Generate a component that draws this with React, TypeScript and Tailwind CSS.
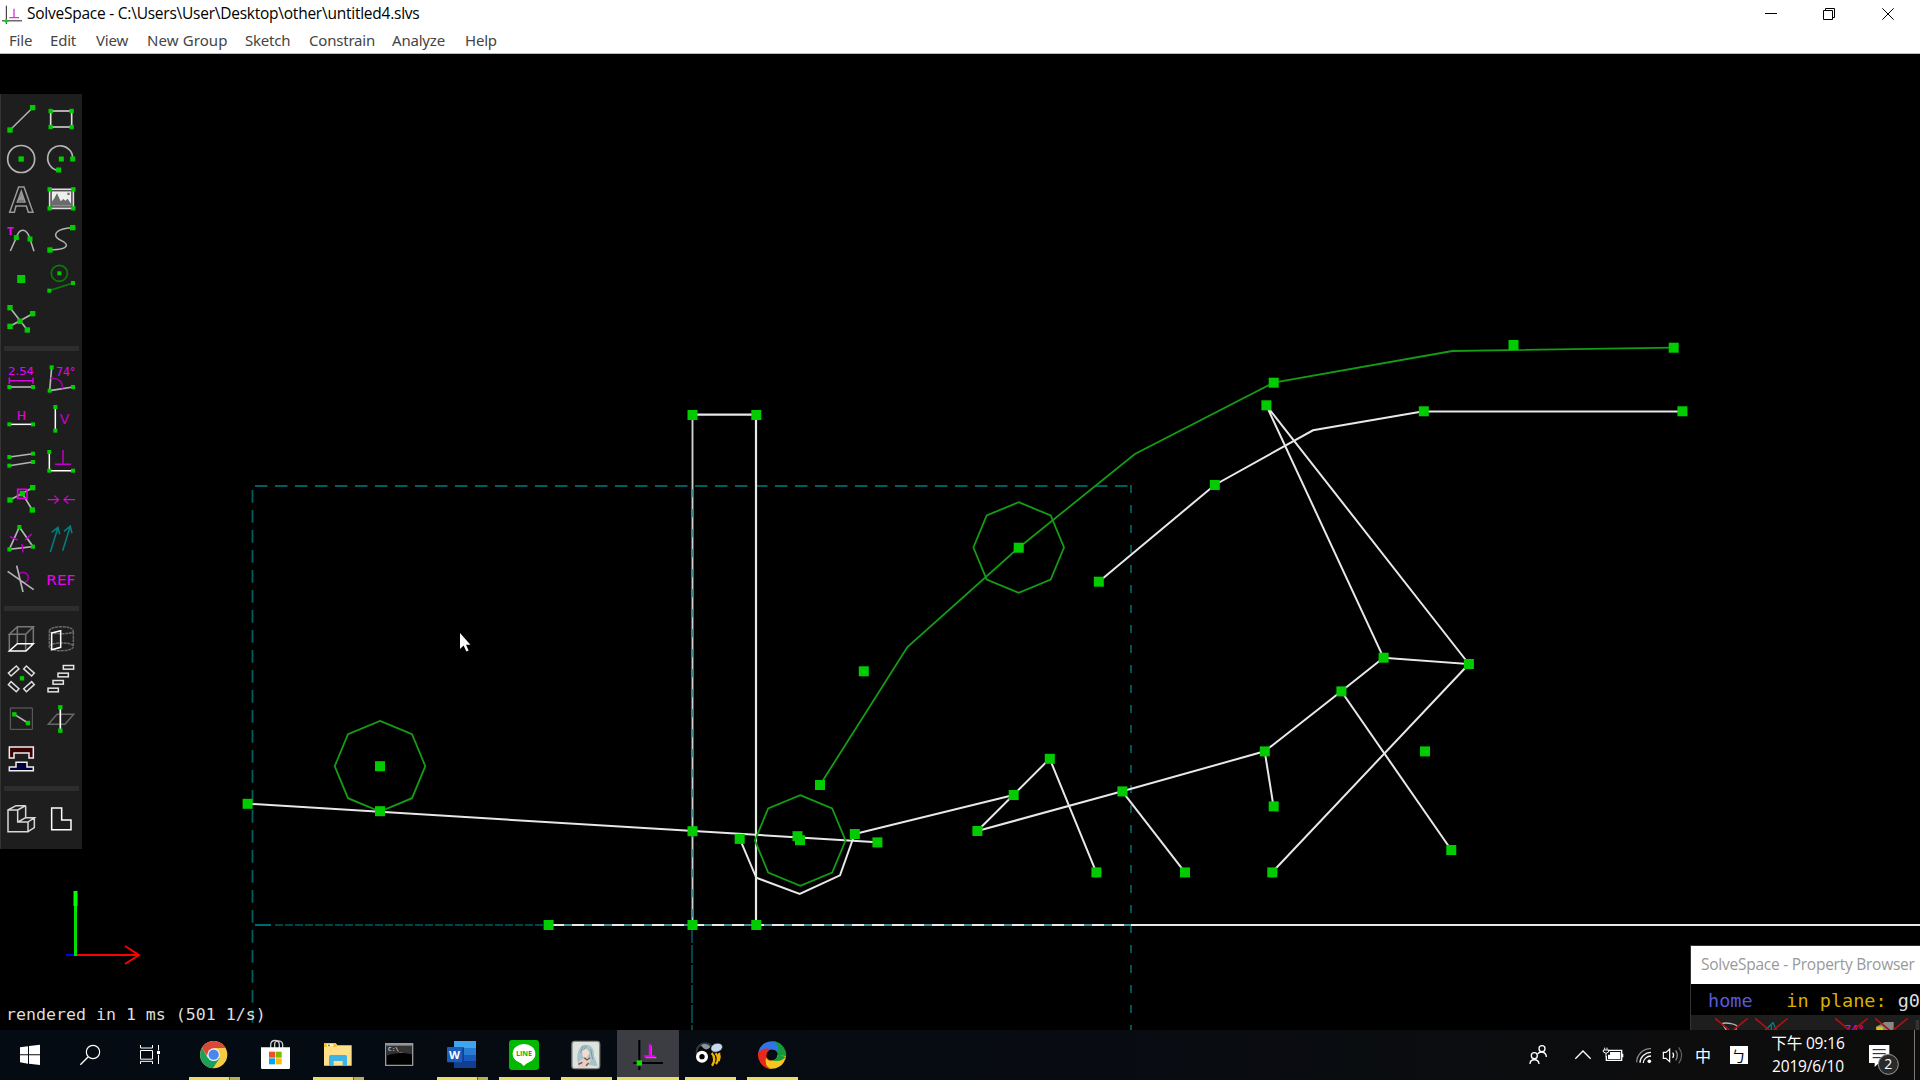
import React from "react";

type Pt = [number, number];

const GREEN = "#00cc00";
const MAG = "#e000e0";

/* ---------- sketch canvas ---------- */

const points: Pt[] = [
  [692.5, 415], [756.3, 415], [692.5, 831.2], [739.7, 838.9], [797.5, 836.2], [800, 840.2], [820, 785],
  [854.8, 834], [877.4, 842.4], [1013.7, 795], [1049.8, 758.8], [977.4, 831], [1122.4, 791.4],
  [1096.4, 872.4], [692.5, 925], [756.3, 925], [548.6, 925], [247.6, 803.8], [380, 766.2], [380, 811.2],
  [1273.7, 382.7], [1673.7, 347.7], [1513.5, 345], [1266.4, 405.3], [1214.8, 485], [1423.8, 411.3],
  [1682.4, 411.3], [1018.7, 547.7], [863.8, 671.3], [1098.8, 581.7], [1383.6, 657.7], [1468.9, 664],
  [1341.4, 691.4], [1264.8, 751.4], [1425, 751.4], [1273.7, 806.4], [1451.3, 850], [1272.3, 872.4],
  [1185, 872.4],
];

const whiteLines = [
  "247.6,803.7 877.3,842.3",
  "739.7,838.7 756.3,877.8 799.7,894 840,875.3 854.7,834",
  "854.7,834 1013.7,795",
  "977.3,831 1049.7,758.7 1096.3,872.3",
  "977.3,831 1122.3,791.3 1264.7,751.3 1341.3,691.3 1383.5,657.7 1468.9,664 1272.2,872.3",
  "1122.3,791.3 1185,872.3",
  "1264.7,751.3 1273.5,806.3",
  "1341.3,691.3 1451.3,850",
  "1383.5,657.7 1266.3,405.3 1468.9,664",
  "1098.8,581.7 1214.7,485 1313,430.3 1423.7,411.3",
];

const octagon = (cx: number, cy: number) => {
  const r = 45.3;
  const d = 32;
  return `${cx},${cy - r} ${cx + d},${cy - d} ${cx + r},${cy} ${cx + d},${cy + d} ${cx},${cy + r} ${cx - d},${cy + d} ${cx - r},${cy} ${cx - d},${cy - d}`;
};

function Sketch() {
  return (
    <svg className="absolute inset-0 h-full w-full" viewBox="0 54 1920 976" fill="none">
      <g stroke="#005e60" strokeWidth="1.8">
        <path d="M255 486H1131" strokeDasharray="12.5 7.5" />
        <path d="M252.5 490V1030" strokeDasharray="12.7 7.3" />
        <path d="M1131 485V1030" strokeDasharray="8 12" />
        <path d="M255 925H271" stroke="#006b6e" strokeWidth="2" />
        <path d="M275 925H548" strokeDasharray="8 2" strokeWidth="1.5" />
        <path d="M692 925V1030" strokeDasharray="18 2" strokeWidth="1.5" />
      </g>
      <g stroke="#e8e8e8" strokeWidth="2">
        {whiteLines.map((p) => (
          <polyline key={p} points={p} />
        ))}
        <path d="M692.5 415V925" stroke="#cfcfcf" strokeWidth="1.9" />
        <path d="M692.3 414.7H756M756 415V925M548.5 925H1920M1423.7 411.5H1682.3" strokeWidth="2.2" />
      </g>
      <g stroke="#3c8f92" strokeWidth="2">
        <path d="M692.3 489V925" strokeDasharray="8.3 11.7" />
        <path d="M564 925H1131" strokeDasharray="8 12" strokeWidth="2.2" />
      </g>
      <g stroke="#149c14" strokeWidth="1.8">
        <polygon points={octagon(380, 766.2)} />
        <polygon points={octagon(800.2, 840.5)} />
        <polygon points={octagon(1018.7, 547.5)} />
        <polyline points="820,785 907.4,647 1018.7,547.7 1134.9,454 1273.7,382.7 1452.3,351 1673.7,347.7" />
      </g>
      {points.map(([x, y], i) => (
        <rect key={i} x={x - 5} y={y - 5} width="10" height="10" fill={GREEN} />
      ))}
      <g strokeWidth="2">
        <path d="M66 955H75" stroke="#0000ff" />
        <path d="M76 955H139M125 946L139 955L125 964" stroke="#ff0000" />
        <path d="M75.5 956V892" stroke="#00e000" strokeWidth="3" />
        <path d="M75.5 906V891" stroke="#00ff00" strokeWidth="4" />
      </g>
      <path d="M460 633V649L463.6 645.6L466.4 651.4L468.6 650.4L466 644.8H470.4Z" fill="#fff" />
    </svg>
  );
}

/* ---------- toolbar ---------- */

/* Green handles drawn at the ends of the icon strokes. */
function Dots({ at, s = 13 }: { at: Pt[]; s?: number }) {
  return (
    <g fill={GREEN} stroke="none">
      {at.map(([x, y], i) => (
        <rect key={i} x={x - s / 2} y={y - s / 2} width={s} height={s} />
      ))}
    </g>
  );
}

function Tools({ top, icons }: { top: number; icons: React.ReactNode[] }) {
  return (
    <div className="grid grid-cols-[40px_40px] pl-px">
      {icons.map((icon, i) => (
        <svg
          key={i}
          className="h-10 w-10"
          viewBox={`${3 + (i % 2) * 120} ${top + Math.floor(i / 2) * 120} 120 120`}
          fill="none"
          stroke="#b4b4b4"
          strokeWidth="4.5"
        >
          {icon}
        </svg>
      ))}
    </div>
  );
}

const label = { fill: "#f000f0", stroke: "none", fontFamily: "'DejaVu Sans', sans-serif" };

const drawTools = [
  <><path d="M30 120L98 53" /><Dots at={[[30, 120], [98, 53]]} s={16} /></>,
  <><path d="M152 63H215V111H152Z" stroke="#ddd" strokeWidth="5" /><Dots at={[[152, 63], [215, 63], [152, 111], [215, 111]]} /></>,
  <><circle cx="63.500" cy="207" r="40.500" strokeWidth="5" /><Dots at={[[63.5, 207]]} s={16} /></>,
  <><path d="M218 207A37.500 37.500 0 1 0 176 242" strokeWidth="5" /><Dots at={[[184, 207], [218, 207], [176, 240]]} s={15} /></>,
  <path d="M56 291H72L99 367H85L79 348H48L43 367H29ZM52 336H75L64 304ZM59 330L64 318L68 330Z" stroke="#999" />,
  <>
    <path d="M149 298H220V355H149Z" stroke="#ddd" strokeWidth="5" fill="#222" />
    <path d="M155 304H214V349H155Z" fill="#eee" stroke="none" />
    <path d="M155 347V335L162 326L171 310L182 334L190 327L196 332L203 326L214 343V347ZM202 308H209V315H202Z" fill="#6b6b6b" stroke="none" />
    <Dots at={[[149, 298], [220, 298], [149, 355], [220, 355]]} />
  </>,
  <>
    <path d="M31 483L49 443C58 413 80 413 90 447L102 484" />
    <text {...label} x="22" y="435" fontSize="29" fontWeight="bold" textLength="19" lengthAdjust="spacingAndGlyphs">T</text>
    <Dots at={[[49, 443], [90, 447]]} s={15} />
  </>,
  <><path d="M218 413C185 414 166 424 167 436C169 452 199 452 199 466C198 477 174 479 150 480" /><Dots at={[[218, 413], [150, 480]]} s={16} /></>,
  <Dots at={[[63.5, 567]]} s={24} />,
  <>
    <circle cx="178" cy="550" r="24" stroke="#087d08" strokeWidth="5" />
    <path d="M148 602L219 579" stroke="#087d08" strokeWidth="5" />
    <Dots at={[[178, 550], [148, 602], [219, 579]]} s={12} />
  </>,
  <><path d="M30 653L82 720M30 709L98 671" strokeWidth="5" /><Dots at={[[30, 653], [82, 720], [30, 709], [98, 671], [60, 694]]} s={16} /></>,
];

const constrainTools = [
  <>
    <text {...label} x="24" y="106" fontSize="34" textLength="78" lengthAdjust="spacingAndGlyphs">2.54</text>
    <path d="M28 113V131M99 113V131M28 122H99" stroke={MAG} />
    <path d="M28 141H99" strokeWidth="5" />
    <Dots at={[[28, 141], [99, 141]]} s={12} />
  </>,
  <>
    <path d="M155 82L149 152L219 141" strokeWidth="5" />
    <path d="M152 115C175 112 189 126 187 146" stroke="#a000a8" />
    <text {...label} x="168" y="109" fontSize="36" textLength="58" lengthAdjust="spacingAndGlyphs">74°</text>
    <Dots at={[[155, 82], [149, 152], [219, 141]]} s={12} />
  </>,
  <>
    <text {...label} x="50" y="240" fontSize="35" textLength="28" lengthAdjust="spacingAndGlyphs">H</text>
    <path d="M28 253H99" stroke="#fff" />
    <Dots at={[[28, 253], [99, 253]]} s={12} />
  </>,
  <>
    <path d="M166 201V272" stroke="#fff" />
    <text {...label} x="179" y="252" fontSize="43" fill="#c400cc" textLength="29" lengthAdjust="spacingAndGlyphs">V</text>
    <Dots at={[[166, 201], [166, 272]]} s={12} />
  </>,
  <><path d="M28 351L99 341M28 377L99 366" /><Dots at={[[28, 351], [99, 341], [28, 377], [99, 366]]} s={12} /></>,
  <>
    <path d="M148 336V392H219" stroke="#fff" />
    <path d="M165 373H214M189 373V330" stroke="#c000c8" />
    <Dots at={[[148, 336], [148, 392], [219, 392]]} s={12} />
  </>,
  <>
    <path d="M30 480L98 443M67 461L97 510" strokeWidth="5" />
    <Dots at={[[30, 480], [98, 443], [67, 461], [97, 510]]} s={16} />
    <path d="M53 448H81V475H53Z" stroke={MAG} strokeWidth="5" />
  </>,
  <path d="M143 479H176M163 467L176 479L163 491M225 479H192M205 467L192 479L205 491" stroke={MAG} strokeWidth="3.500" />,
  <>
    <path d="M58 561L28 628L99 620Z" strokeWidth="5" />
    <path d="M30 590L53 600M75 600L95 582M66 612L69 637" stroke="#c000c8" />
    <Dots at={[[58, 561], [28, 628], [99, 620]]} s={12} />
  </>,
  <path d="M151 636L174 562M155 577L174 562L179 583M188 632L211 558M192 574L211 558L216 580" stroke="#008080" />,
  <>
    <path d="M58 700C72 692 87 702 85 716C83 727 72 729 63 724" stroke="#a000a8" strokeWidth="5" />
    <path d="M23 694L101 749M50 677L69 756" strokeWidth="5" />
  </>,
  <text {...label} x="139" y="734" fontSize="42" textLength="87" lengthAdjust="spacingAndGlyphs">REF</text>,
];

const slats: Pt[] = [[205, 202], [189, 225], [174, 247], [159, 270]];

const groupTools = [
  <>
    <path d="M28 103L52 80H100L77 103ZM28 103V153M52 80V130M77 103V152M100 80V130" stroke="#777" />
    <path d="M28 153L52 131H100L78 153Z" stroke="#fff" />
  </>,
  <>
    <path d="M148 93C148 76 220 76 220 93C220 104 148 104 148 93V140C148 156 220 156 220 140V93M148 137C160 126 210 126 220 137" stroke="#6a6a6a" strokeDasharray="9 2" />
    <path d="M155 99L182 92V142L155 149Z" stroke="#fff" />
  </>,
  <>
    {([[41, 213, -42], [87, 213, 42], [41, 260, 42], [87, 260, -42]] as [number, number, number][]).map(([x, y, a]) => (
      <rect key={`${x}-${y}`} x={x - 16} y={y - 6} width="32" height="12" transform={`rotate(${a} ${x} ${y})`} stroke="#ddd" />
    ))}
    <Dots at={[[66, 235]]} />
  </>,
  <>
    {slats.map(([x, y]) => (
      <rect key={x} x={x - 15} y={y - 5.5} width="31" height="11" stroke="#e4e4e4" />
    ))}
  </>,
  <><path d="M31 324H97V388H31Z" stroke="#666" strokeWidth="3" /><path d="M43 343L84 369" strokeWidth="5" /><Dots at={[[43, 343], [84, 369]]} /></>,
  <>
    <path d="M145 373L171 343H221L195 373Z" stroke="#666" />
    <path d="M181 322V392" stroke="#fff" strokeWidth="5" />
    <Dots at={[[181, 322], [181, 392]]} />
  </>,
  <>
    <path d="M28 441H100V474H87V459H42V474H28Z" fill="#3c0000" stroke="#eee" />
    <path d="M28 512V501H48V487H81V501H100V512Z" fill="#00003c" stroke="#eee" />
  </>,
];

const viewTools = [
  <path d="M24 630H53V666H84V695H24ZM24 630L48 617H77L53 630M77 617V653L54 666M77 653H103L84 666M103 653V683L84 695" stroke="#d8d8d8" />,
  <path d="M155 624H185V660H213V689H155Z" stroke="#fff" />,
];

function Rule() {
  return <div className="ml-1 h-[5px] w-[75px] shrink-0 bg-[#2d2d2d]" />;
}

function Toolbar() {
  return (
    <div className="absolute left-0 top-10 flex h-[755px] w-[82px] flex-col border-l border-[#333] bg-[#1e1e1e] pt-[5px]">
      <div className="-ml-px flex flex-col">
        <Tools top={27} icons={drawTools} />
        <div className="pt-[7px] pb-2"><Rule /></div>
        <Tools top={57} icons={constrainTools} />
        <div className="pt-[7px] pb-2"><Rule /></div>
        <Tools top={57} icons={groupTools} />
        <div className="pt-[7px] pb-2"><Rule /></div>
        <Tools top={597} icons={viewTools} />
      </div>
    </div>
  );
}

/* ---------- title and menus ---------- */

const menus: [string, string][] = [
  ["File", "w-[41px]"], ["Edit", "w-[46px]"], ["View", "w-[51px]"], ["New Group", "w-[98px] tracking-[0.1px]"],
  ["Sketch", "w-[64px]"], ["Constrain", "w-[83px]"], ["Analyze", "w-[73px]"], ["Help", "w-[60px]"],
];

function TitleBar() {
  return (
    <header className="h-[54px] border-b border-[#bbb] bg-white text-black">
      <div className="flex h-[28px] items-center">
        <svg className="ml-0.5 h-5 w-5" viewBox="6 8 60 60" fill="none">
          <path d="M19 13V68M6 58.500H66" stroke="#222" strokeWidth="3" />
          <path d="M42 22V49M28 49H57" stroke="#d838d8" strokeWidth="4" />
          <path d="M12 59L19 52L26 59L19 66Z" fill="#10d010" />
        </svg>
        <span className="ml-[5px] whitespace-nowrap font-['Open_Sans','Noto_Sans',sans-serif] text-[15.5px] tracking-[-0.24px]">
          SolveSpace - C:\Users\User\Desktop\other\untitled4.slvs
        </span>
        <svg className="ml-auto h-[29px] w-[200px] shrink-0" viewBox="0 0 600 87" fill="none" stroke="#000" strokeWidth="3">
          <path d="M135 40.500H171M310.500 31.500H337.500V58.500H310.500ZM316.500 30V25.500H343.500V52.500H338M487 25L521 59M521 25L487 59" />
        </svg>
      </div>
      <nav className="flex h-6 items-center pl-[9px] font-['Noto_Sans',sans-serif] text-[15px] tracking-[-0.2px] text-[#444]">
        {menus.map(([name, w]) => (
          <span key={name} className={`${w} whitespace-nowrap`}>{name}</span>
        ))}
      </nav>
    </header>
  );
}

/* ---------- property browser ---------- */

function PropertyBrowser() {
  return (
    <div className="absolute bottom-0 right-0 h-[85px] w-[230px] overflow-hidden border-l border-t border-[#333] bg-[#1e1e1e]">
      <div className="flex h-[38px] items-center bg-white pl-[10px] font-['Open_Sans',sans-serif] text-[15.5px] tracking-[-0.25px] whitespace-nowrap text-[#999]">
        SolveSpace - Property Browser
      </div>
      <div className="flex h-[31px] items-center whitespace-pre bg-black pl-[17px] pt-0.5 font-['DejaVu_Sans_Mono',monospace] text-[18.5px] text-[#d8b000]">
        <span className="w-[81px] text-[#5a5ad8]">home</span>
        <span>in plane: </span>
        <span className="text-[#ddd]">g0</span>
      </div>
      <svg className="h-[15px] w-[228px]" viewBox="574 255 684 45" fill="none" stroke="#b4b4b4" strokeWidth="4">
        <path d="M666 281C680 276 712 282 712 290L708 300M668 281L680 300" />
        <path d="M797 300L820 278L830 300M815 300V285" stroke="#008080" />
        <text {...label} x="1034" y="309" fontSize="32" textLength="58" lengthAdjust="spacingAndGlyphs">74°</text>
        <path d="M1130 290L1155 276H1182V300H1130Z" fill="#888" stroke="none" />
        <path d="M1130 290H1150V300H1130Z" fill="#cccc00" stroke="none" />
        <path d="M646 265L695 305L744 265M766 265L815 305L864 265M1006 265L1055 305L1104 265M1126 265L1175 305L1224 265" stroke="#b01010" strokeWidth="5" />
        <path d="M1248 270H1260V300H1248Z" fill="#333" stroke="none" />
      </svg>
    </div>
  );
}

/* ---------- taskbar ---------- */

const solveIcon = (
  <>
    <path d="M1018 45V135M1000 114H1089" stroke="#000" strokeWidth="6" />
    <path d="M1037 98H1069M1053 62V92" stroke="#999" strokeWidth="4" />
    <path d="M1033 94H1065M1050 58V94" stroke="#f000f0" strokeWidth="7" />
    <path d="M1010 106H1026V122H1010Z" fill="#10e000" />
  </>
);

interface TaskApp {
  view: string;
  icon: React.ReactNode;
  state?: "open" | "many" | "active";
}

const apps: TaskApp[] = [
  {
    view: "549 480 186 150", state: "many",
    icon: (
      <>
        <circle cx="641" cy="554" r="41" fill="#f8cb45" />
        <path d="M606 533A41 41 0 0 0 639 595L659 564L641 554L623 564Z" fill="#1a9f5c" />
        <path d="M606 533A41 41 0 0 1 677 534H641L620 556Z" fill="#d9483b" />
        <circle cx="641" cy="554" r="19" fill="#f4f4f4" />
        <circle cx="641" cy="554" r="15.500" fill="#4a86ee" />
      </>
    ),
  },
  {
    view: "735 480 186 150",
    icon: (
      <>
        <path d="M812 534V525C812 507 838 507 838 525V534M824 534V522C824 508 848 510 848 525V534" stroke="#ccc" strokeWidth="4" />
        <path d="M783 532H870V593Q870 597 866 597H787Q783 597 783 593Z" fill="#fff" />
        <path d="M807 545H825V563H807Z" fill="#f25022" /><path d="M827 545H845V563H827Z" fill="#7fba00" />
        <path d="M807 565H825V583H807Z" fill="#00a4ef" /><path d="M827 565H845V583H827Z" fill="#ffb900" />
      </>
    ),
  },
  {
    view: "21 15 186 150", state: "many",
    icon: (
      <>
        <path d="M72 54H107L112 61H155V122H72Z" fill="#ffe08a" /><path d="M72 54H107L111 66H72Z" fill="#f8c030" />
        <path d="M81 58H100V64H81Z" fill="#fff" /><path d="M84 59H90V63H84Z" fill="#2a8fd0" />
        <path d="M87 123V95Q87 90 92 90H136Q141 90 141 95V123H128V108H101V123Z" fill="#3cb4e7" />
      </>
    ),
  },
  {
    view: "207 15 186 150",
    icon: (
      <>
        <path d="M257 56H338V121H257Z" fill="#000" stroke="#999" strokeWidth="4" />
        <path d="M259 58H336V62H259Z" fill="#ccc" /><path d="M259 62H336V88Q290 78 259 92Z" fill="#333" />
        <text x="264" y="78" fontSize="16" fill="#eee" textLength="44" lengthAdjust="spacingAndGlyphs" fontFamily="'DejaVu Sans Mono', monospace">C:\_</text>
      </>
    ),
  },
  {
    view: "393 15 186 150", state: "many",
    icon: (
      <>
        <path d="M462 48H528V69H462Z" fill="#41a5ee" /><path d="M462 69H528V90H462Z" fill="#2b7cd3" />
        <path d="M462 90H528V110H462Z" fill="#185abd" /><path d="M462 110H528V129H462Z" fill="#103f91" />
        <path d="M462 67H492V118H462Z" fill="#123f88" />
        <rect x="441" y="66" width="46" height="46" rx="3" fill="#1b5ebe" />
        <text x="447" y="101" fontSize="34" fontWeight="bold" fill="#fff" textLength="33" lengthAdjust="spacingAndGlyphs" fontFamily="'Open Sans', sans-serif">W</text>
      </>
    ),
  },
  {
    view: "579 15 186 150", state: "open",
    icon: (
      <>
        <rect x="627" y="45" width="90" height="90" rx="9" fill="#00b900" />
        <ellipse cx="672" cy="86" rx="34" ry="29" fill="#fff" />
        <path d="M660 112H685L671 123Z" fill="#fff" />
        <text x="648" y="94" fontSize="22" fontWeight="bold" fill="#00b900" textLength="48" lengthAdjust="spacingAndGlyphs" fontFamily="'Open Sans', sans-serif">LINE</text>
      </>
    ),
  },
  {
    view: "765 15 186 150", state: "open",
    icon: (
      <>
        <rect x="816" y="49" width="83" height="82" rx="8" fill="#dfe3dd" stroke="#888" strokeWidth="4" />
        <path d="M842 125C825 112 830 68 851 60C873 57 884 72 882 92L893 122C880 126 862 115 850 122Z" fill="#a6c4c8" />
        <path d="M846 77C854 68 866 72 868 84C866 95 856 100 848 94Z" fill="#f0dcd0" />
        <path d="M838 108L862 94L873 104L862 128H832Z" fill="#e2cfc4" />
        <path d="M853 98L861 105L870 98M835 118L847 112M858 122L866 114" stroke="#7a4d48" strokeWidth="4" />
        <path d="M849 63L842 83M860 62L850 76M872 72L878 103" stroke="#779aa2" strokeWidth="3" />
      </>
    ),
  },
  { view: "951 15 186 150", state: "active", icon: solveIcon },
  {
    view: "1137 15 186 150", state: "open",
    icon: (
      <>
        <circle cx="1215" cy="80" r="28" fill="#303840" /><circle cx="1218" cy="86" r="27" fill="#030303" />
        <path d="M1203 61C1211 54 1225 56 1231 65C1223 77 1211 76 1203 61Z" fill="#8a949e" />
        <ellipse cx="1243" cy="102" rx="24" ry="27" fill="#080808" />
        <path d="M1235 84C1246 95 1244 112 1236 122M1247 85C1257 96 1254 109 1248 117M1257 84Q1261 95 1256 108" stroke="#f2b400" strokeWidth="7" />
        <ellipse cx="1250" cy="68" rx="18" ry="13" transform="rotate(-18 1250 68)" fill="#c4d8f0" stroke="#222" strokeWidth="2" />
        <circle cx="1206" cy="95" r="18" fill="#fff" /><circle cx="1206" cy="95" r="8" fill="#000" />
      </>
    ),
  },
  {
    view: "1323 15 186 150", state: "open",
    icon: (
      <g strokeWidth="25">
        <path d="M1387 86A29 29 0 0 1 1426 63" stroke="#3074e8" />
        <path d="M1420 61A29 29 0 0 1 1444 100" stroke="#15993a" />
        <path d="M1445 92A29 29 0 0 1 1406 117" stroke="#f8c51c" />
        <path d="M1412 119A29 29 0 0 1 1387 84" stroke="#e8291c" />
        <path d="M1420 49Q1440 60 1433 82Q1426 72 1416 72Z" fill="#3074e8" stroke="none" />
        <path d="M1457 96Q1443 112 1420 107Q1433 100 1434 88Z" fill="#15993a" stroke="none" />
        <path d="M1412 131Q1392 122 1398 98Q1405 108 1416 108Z" fill="#f8c51c" stroke="none" />
        <path d="M1375 84Q1388 66 1412 72Q1400 79 1398 92Z" fill="#e8291c" stroke="none" />
      </g>
    ),
  },
];

function Cell({ view, w, children }: { view: string; w: string; children: React.ReactNode }) {
  return <svg className={`h-[50px] shrink-0 ${w}`} viewBox={view} fill="none" stroke="none">{children}</svg>;
}

function Taskbar() {
  return (
    <footer className="flex h-[50px] overflow-hidden bg-linear-to-r from-[#050b12] via-[#070b12] to-[#0e0d0c] text-white">
      <Cell w="w-[60px]" view="0 480 180 150">
        <path d="M60 532L84 529V553H60ZM87 528L120 524V553H87ZM60 556H84V581L60 577ZM87 556H120V585L87 581Z" fill="#fff" />
      </Cell>
      <Cell w="w-[60px]" view="180 480 180 150">
        <path d="M264 561L241 584" stroke="#fff" strokeWidth="4" /><circle cx="279" cy="546" r="20" stroke="#fff" strokeWidth="3.500" />
      </Cell>
      <Cell w="w-[63px]" view="360 480 189 150">
        <path d="M421.500 525V534H457.500V525M421.500 541.500H457.500V567.500H421.500ZM421.500 582V574H457.500V582M475.500 525V541M475.500 554V582" stroke="#fff" strokeWidth="3" />
        <path d="M471 543H480V552H471Z" fill="#fff" />
      </Cell>
      {apps.map((a) => (
        <div key={a.view} className={`relative w-[62px] shrink-0 ${a.state === "active" ? "bg-[#3b3d42]" : ""}`}>
          <Cell w="w-[62px]" view={a.view}>{a.icon}</Cell>
          {a.state && (
            <div className={`absolute bottom-0 flex h-[3px] justify-end bg-[#ecdc62] ${a.state === "active" ? "inset-x-0" : "left-1.5 w-[51px]"}`}>
              {a.state === "many" && <div className="w-[11px] border-l border-[#6b6330] bg-[#b9ad55]" />}
            </div>
          )}
        </div>
      ))}
      <div className="ml-auto flex">
        <Cell w="w-[48px]" view="60 300 144 150">
          <g stroke="#fff" strokeWidth="4">
            <circle cx="126" cy="356" r="9" /><circle cx="103" cy="377" r="9" />
            <path d="M90 402C90 385 116 385 117 402M113 372C120 361 139 366 139 381" />
          </g>
        </Cell>
        <Cell w="w-[30px]" view="204 300 90 150"><path d="M226 386L249 363L272 386" stroke="#fff" strokeWidth="4" /></Cell>
        <Cell w="w-[30px]" view="294 300 90 150">
          <path d="M325 361H365V391H319V378" stroke="#fff" strokeWidth="4" /><path d="M330 366H361V387H324V374H330ZM365 371H370V382H365Z" fill="#fff" />
          <path d="M314 353V359M321 353V359M310 360H326V366Q318 374 310 366ZM318 370V380" stroke="#fff" strokeWidth="3" />
        </Cell>
        <Cell w="w-[30px]" view="384 300 90 150">
          <g strokeWidth="4">
            <path d="M410 397C410 374 430 355 453 356" stroke="#888" /><path d="M420 398C420 382 435 367 453 367" stroke="#eee" />
            <path d="M430 399C430 388 440 378 453 378" stroke="#fff" />
          </g>
          <circle cx="448" cy="394" r="5.500" fill="#fff" />
        </Cell>
        <Cell w="w-[30px]" view="474 300 90 150">
          <g strokeWidth="3.500">
            <path d="M490 367H498L509 357V395L498 385H490Z" stroke="#fff" /><path d="M518 368Q524 376 518 384" stroke="#fff" />
            <path d="M527 361Q537 376 527 391" stroke="#999" /><path d="M536 352Q554 376 536 400" stroke="#666" />
          </g>
        </Cell>
        <div className="grid w-[30px] place-items-center font-['Noto_Sans_CJK_TC',sans-serif] text-[16px]">中</div>
        <div className="grid w-[41px] place-items-center">
          <span className="grid h-[18px] w-[18px] place-items-center bg-white font-['Noto_Sans_CJK_TC',sans-serif] text-[15px] leading-none text-black">ㄅ</span>
        </div>
        <div className="flex w-[98px] flex-col items-center pt-0.5 font-['Open_Sans','Noto_Sans_CJK_TC',sans-serif] text-[15.5px] leading-[23px] tracking-[-0.15px] whitespace-nowrap">
          <span>下午 09:16</span>
          <span>2019/6/10</span>
        </div>
        <Cell w="w-[63px]" view="1071 300 189 150">
          <path d="M1107 345H1168V399H1137L1124 411V399H1107Z" fill="#fff" />
          <path d="M1118 359H1157M1118 371H1157M1118 383H1145" stroke="#111" strokeWidth="3" />
          <circle cx="1165" cy="403" r="30" fill="#2a2a2a" stroke="#999" strokeWidth="3" />
          <text x="1165" y="417" textAnchor="middle" fontSize="42" fill="#fff" fontFamily="'Open Sans', sans-serif">2</text>
          <path d="M1243.500 300V450" stroke="#777" strokeWidth="3" />
        </Cell>
      </div>
    </footer>
  );
}

export default function App() {
  return (
    <div className="flex h-[1080px] w-[1920px] flex-col overflow-hidden bg-black">
      <TitleBar />
      <main className="relative h-[976px] overflow-hidden bg-black">
        <Sketch />
        <Toolbar />
        <div className="absolute bottom-0.5 left-1.5 whitespace-pre font-['DejaVu_Sans_Mono',monospace] text-[16.6px] text-[#ddd]">
          rendered in 1 ms (501 1/s)
        </div>
        <PropertyBrowser />
      </main>
      <Taskbar />
    </div>
  );
}
